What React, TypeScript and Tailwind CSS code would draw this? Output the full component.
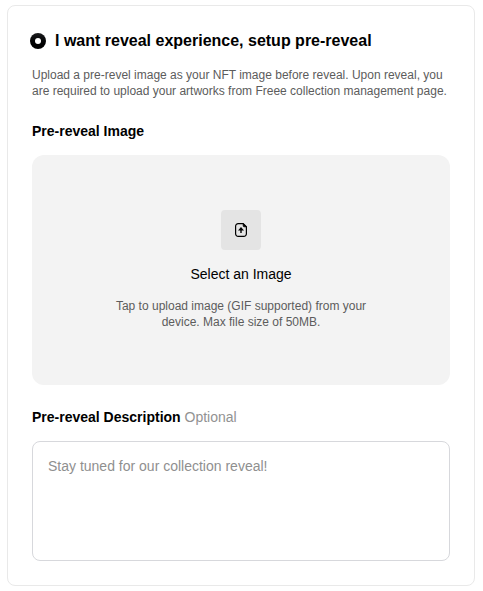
export default function App() {
  return (
    <main className="h-[591px] w-[483px] bg-white pl-[7px] pt-[5px] font-['Liberation_Sans',Arial,sans-serif] text-black">
      <section className="h-[581px] w-[468px] rounded-lg border border-[#e9e9e9] px-6 pt-[25px]">
        <label className="-ml-0.5 flex h-5 items-center gap-[9px]">
          <span className="flex size-4 shrink-0 items-center justify-center rounded-full bg-linear-to-b from-[#1c1d1f] to-black">
            <span className="size-[6.5px] rounded-full bg-white" />
          </span>
          <span className="whitespace-nowrap text-base font-bold leading-5">I want reveal experience, setup pre-reveal</span>
        </label>
        <p className="mt-4 whitespace-nowrap text-xs leading-4 text-[#5c5c5c]">
          Upload a pre-revel image as your NFT image before reveal. Upon reveal, you
          <br />
          are required to upload your artworks from Freee collection management page.
        </p>
        <h2 className="mt-[22px] text-sm font-bold leading-5">Pre-reveal Image</h2>
        <div className="mt-[14px] flex h-[230px] w-[418px] flex-col items-center rounded-xl bg-[#f3f3f3] pt-[55px]">
          <div className="flex size-10 items-center justify-center rounded-sm bg-[#e4e4e4]">
            <svg className="size-4" viewBox="0 0 16 16" fill="none" stroke="black" strokeWidth="1.2">
              <path d="M10.2 1.6H5.2a2.6 2.6 0 0 0-2.6 2.6v7.6a2.6 2.6 0 0 0 2.6 2.6h5.6a2.6 2.6 0 0 0 2.6-2.6V4.8Z" />
              <path d="M10.2 1.6v2.2a1 1 0 0 0 1 1h2.2Z" fill="black" strokeWidth="0.8" />
              <path d="M8 11V7" strokeWidth="1.4" />
              <path d="M5 8.5 8 5l3 3.5Z" fill="black" stroke="none" />
            </svg>
          </div>
          <p className="mt-[14px] text-sm leading-5">Select an Image</p>
          <p className="mt-[14px] whitespace-nowrap text-center text-xs leading-4 text-[#5c5c5c]">
            Tap to upload image (GIF supported) from your
            <br />
            device. Max file size of 50MB.
          </p>
        </div>
        <h2 className="mt-[22px] text-sm font-bold leading-5">
          Pre-reveal Description <span className="font-normal text-[#929292]">Optional</span>
        </h2>
        <textarea
          className="mt-[14px] block h-[120px] w-[418px] resize-none rounded-lg border border-[#d7d8dc] px-[15px] py-[14px] text-sm leading-5 outline-none placeholder:text-[#8f8f8f]"
          placeholder="Stay tuned for our collection reveal!"
        />
      </section>
    </main>
  );
}
